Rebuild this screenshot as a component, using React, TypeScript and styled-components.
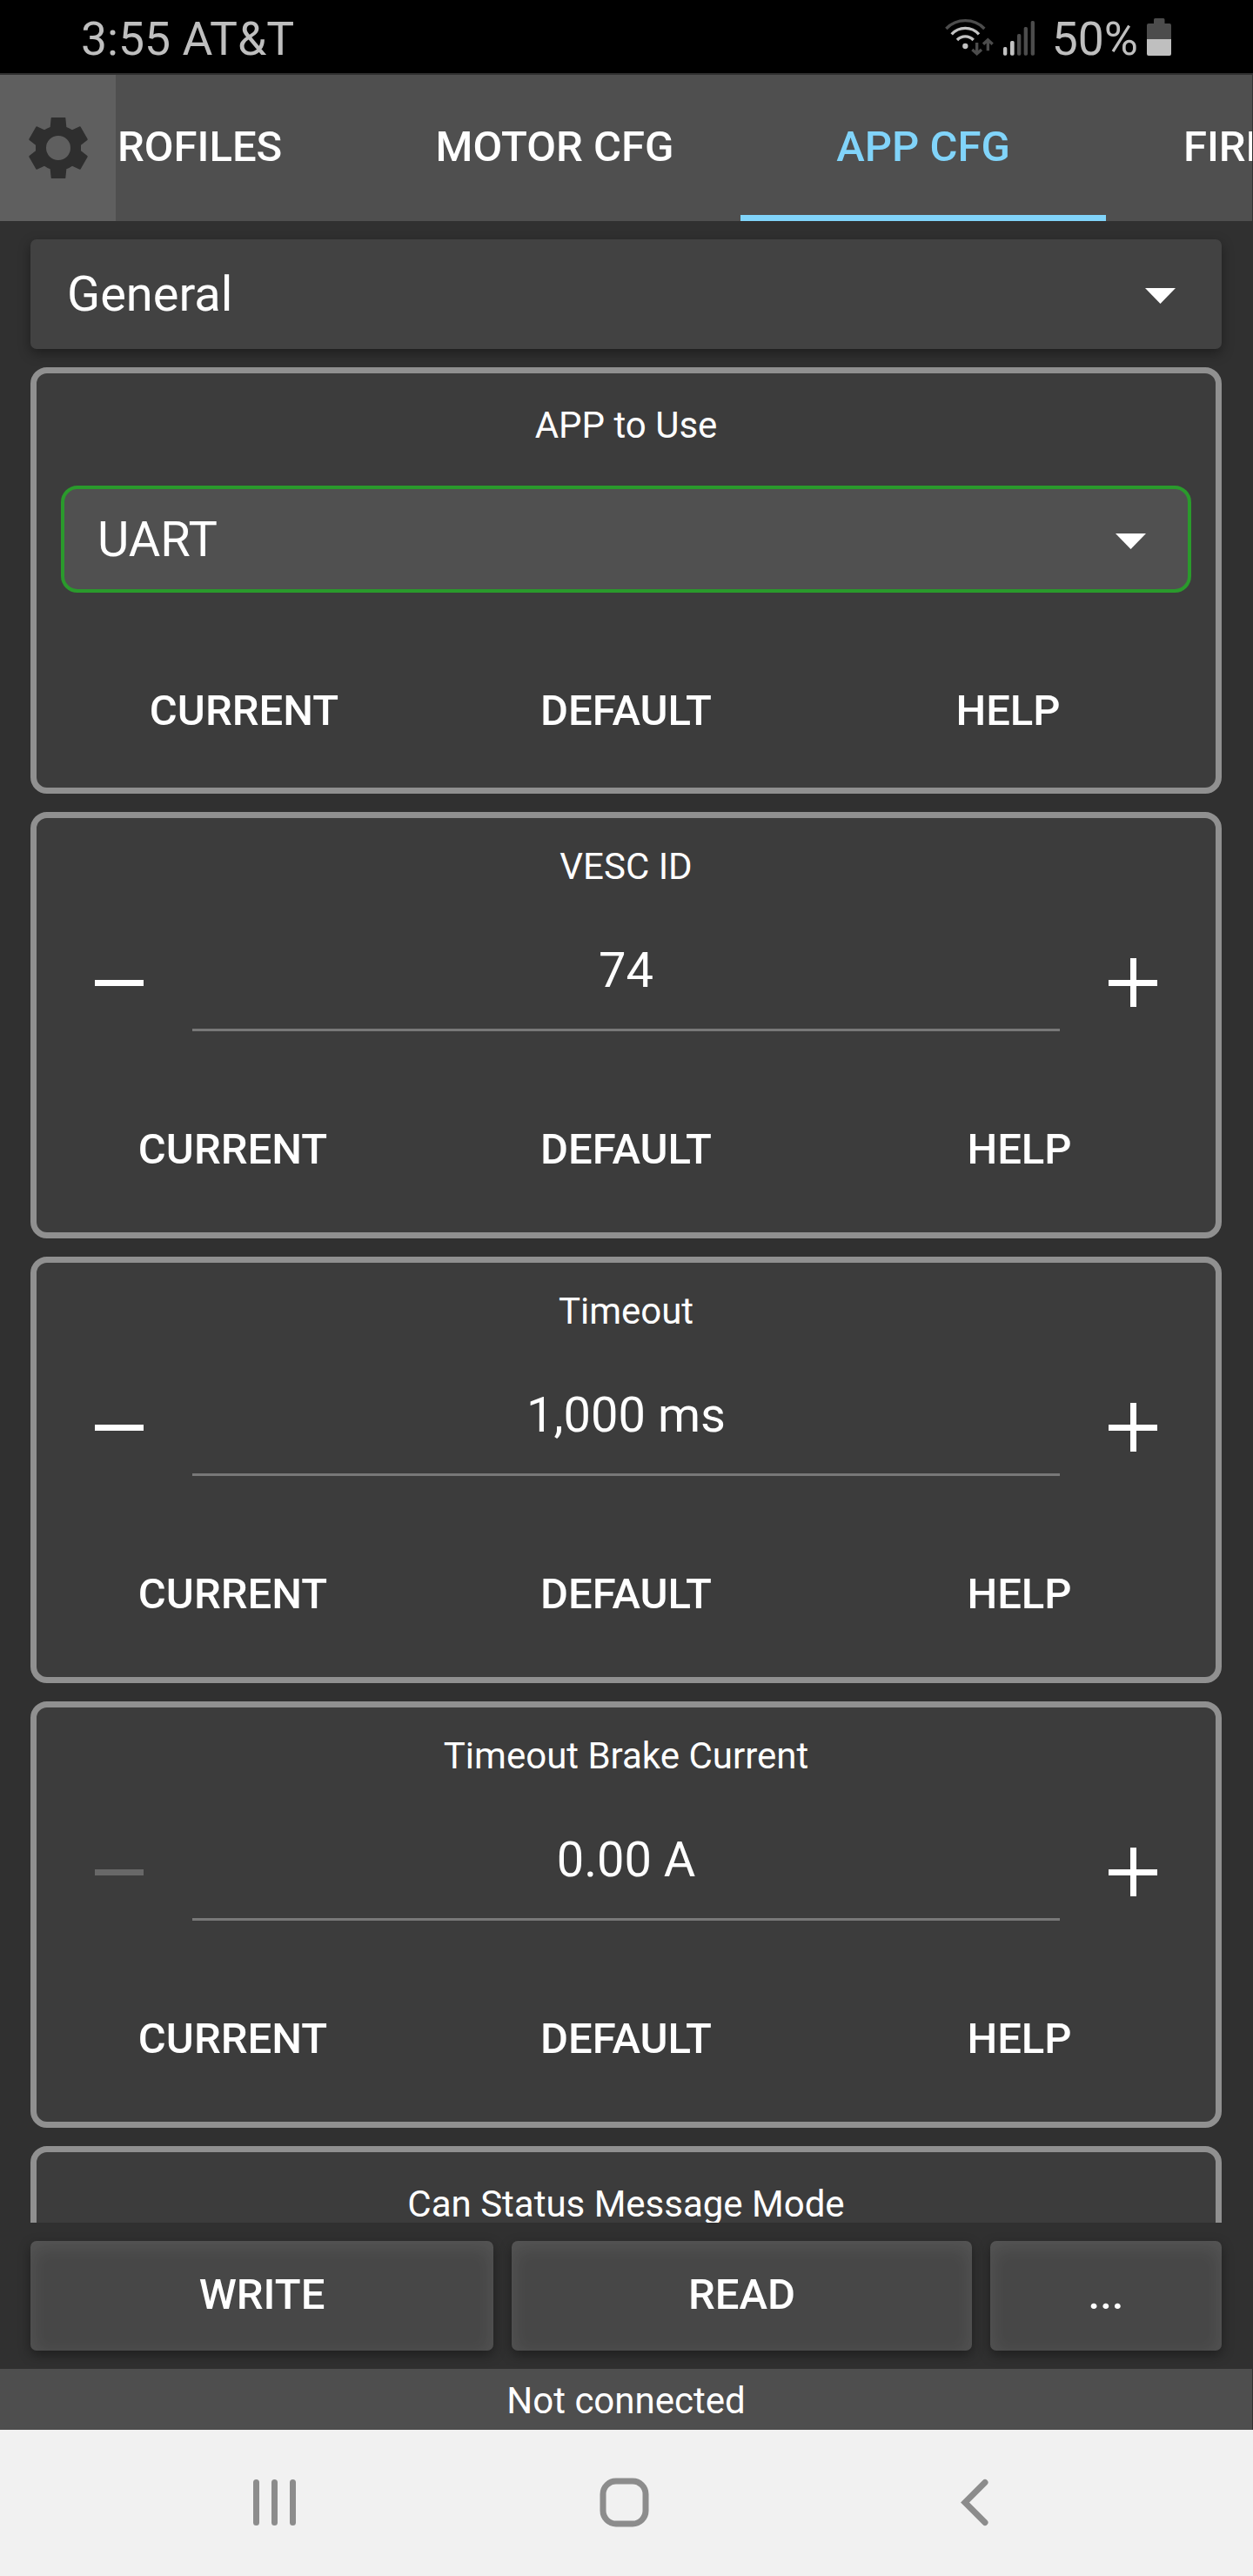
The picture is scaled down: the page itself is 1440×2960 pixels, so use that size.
import React from "react";
import styled, { createGlobalStyle } from "styled-components";

const GlobalStyle = createGlobalStyle`
  *, *::before, *::after { box-sizing: border-box; }
  body { margin: 0; background: #303030; }
  button { appearance: none; border: 0; margin: 0; padding: 0; background: none; color: inherit; font: inherit; }
`;

const Screen = styled.div`
  display: flex;
  flex-direction: column;
  width: 1440px;
  height: 2960px;
  overflow: hidden;
  background: #303030;
  color: #ffffff;
  font-family: Roboto, "Liberation Sans", sans-serif;
  font-size: 42px;
`;

const StatusBar = styled.header`
  display: flex;
  align-items: flex-start;
  justify-content: space-between;
  height: 84px;
  padding: 0 94px 0 93px;
  margin-bottom: 2px;
  background: #000000;
  color: #bfbfbf;
  font-size: 53.5px;
  line-height: 90px;
  flex: none;
`;

const Indicators = styled.div`
  display: flex;
  align-items: flex-start;
`;

const SignalIcons = styled.svg`
  width: 120px;
  height: 70px;
  margin: 10px 9px 0 0;
`;

const BatteryIcon = styled.svg`
  width: 28px;
  height: 43px;
  margin: 21px 0 0 10px;
`;

const Toolbar = styled.nav`
  display: flex;
  height: 168px;
  flex: none;
  margin-right: 1px;
  background: #4f4f4f;
`;

const SettingsButton = styled.button`
  display: flex;
  align-items: center;
  justify-content: center;
  width: 133px;
  height: 168px;
  background: #5f5f5f;
  flex: none;
`;

const GearIcon = styled.svg`
  width: 70px;
  height: 70px;
`;

const TabStrip = styled.div`
  display: flex;
  flex: 1;
  min-width: 0;
  overflow: hidden;
`;

const Tab = styled.div<{ $width: number; $active?: boolean; $align?: string; $pad?: string }>`
  display: flex;
  align-items: center;
  justify-content: ${(p) => p.$align ?? "center"};
  flex: 0 0 ${(p) => p.$width}px;
  padding: ${(p) => p.$pad ?? "0"};
  border-top: 5px solid transparent;
  border-bottom: 7px solid ${(p) => (p.$active ? "#81d4fa" : "transparent")};
  color: ${(p) => (p.$active ? "#81d4fa" : "#ffffff")};
  font-size: 49px;
  font-weight: 500;
  line-height: 56px;
  white-space: nowrap;
`;

const Content = styled.main`
  display: flex;
  flex-direction: column;
  height: 2300px;
  flex: none;
  padding: 21px 36px 0 35px;
  overflow: hidden;
`;

const Select = styled.div<{ $outlined?: boolean }>`
  display: flex;
  align-items: center;
  justify-content: space-between;
  flex: none;
  font-size: 56px;
  line-height: 64px;
  ${(p) =>
    p.$outlined
      ? `
    height: 123px;
    margin: 45px 28px 0;
    padding: 0 48px 0 38px;
    border: 4px solid #2a9a2c;
    border-radius: 19px;
    background: #505050;
  `
      : `
    height: 126px;
    padding: 0 53px 0 42px;
    border-radius: 7px;
    background: #424242;
    box-shadow: 0 5px 14px rgba(0, 0, 0, 0.38);
  `}
`;

const Caret = styled.svg`
  width: 35px;
  height: 18px;
  margin-top: 4px;
`;

const Card = styled.section<{ $top: number }>`
  display: flex;
  flex-direction: column;
  flex: none;
  height: 490px;
  margin-top: 21px;
  padding-top: ${(p) => p.$top}px;
  border: 7px solid #909090;
  border-radius: 19px;
  background: #3c3c3c;
`;

const CardTitle = styled.h2`
  margin: 0;
  font-size: 42px;
  font-weight: 400;
  line-height: 49px;
  text-align: center;
`;

const Stepper = styled.div`
  display: flex;
  justify-content: space-between;
  align-items: center;
  height: 112px;
  margin: 53px 67px 0;
`;

const StepIcon = styled.svg<{ $dim?: boolean }>`
  width: 56px;
  height: 56px;
  fill: ${(p) => (p.$dim ? "#686868" : "#ffffff")};
`;

const Field = styled.div`
  width: 997px;
  height: 112px;
  border-bottom: 3px solid #787878;
  font-size: 56px;
  line-height: 85px;
  text-align: center;
`;

const Actions = styled.div<{ $top: number; $column: number }>`
  display: grid;
  grid-template-columns: repeat(3, ${(p) => p.$column}px);
  justify-content: center;
  column-gap: 19px;
  margin-top: ${(p) => p.$top}px;
`;

const FlatButton = styled.button`
  height: 126px;
  font-size: 49px;
  font-weight: 500;
  line-height: 126px;
  text-align: center;
`;

const Footer = styled.div`
  display: grid;
  grid-template-columns: 532px 529px 266px;
  column-gap: 21px;
  height: 168px;
  flex: none;
  padding: 21px 36px 21px 35px;
`;

const RaisedButton = styled.button`
  height: 126px;
  padding-bottom: 2px;
  border-radius: 7px;
  background: #474747;
  box-shadow: inset 0 6px 22px rgba(255, 255, 255, 0.09), 0 5px 14px rgba(0, 0, 0, 0.38);
  font-size: 49px;
  font-weight: 500;
  line-height: 124px;
  text-align: center;
`;

const ConnectionBar = styled.div`
  height: 70px;
  flex: none;
  margin-right: 1px;
  background: #4e4e4e;
  line-height: 74px;
  text-align: center;
`;

const NavBar = styled.footer`
  display: flex;
  align-items: center;
  justify-content: space-between;
  height: 168px;
  flex: none;
  padding: 0 304px 1px 291px;
  background: #f1f1f1;
`;

const NavIcon = styled.svg<{ $width: number; $gapRight?: number }>`
  width: ${(p) => p.$width}px;
  height: 57px;
  margin-right: ${(p) => p.$gapRight ?? 0}px;
  fill: none;
  stroke: #8c8c8c;
  stroke-width: 7;
`;

const DropCaret = () => (
  <Caret viewBox="0 0 35 18">
    <path d="M0 0H35L17.5 18Z" fill="#fff" />
  </Caret>
);

const ParamActions = ({ top, column }: { top: number; column: number }) => (
  <Actions $top={top} $column={column}>
    <FlatButton>CURRENT</FlatButton>
    <FlatButton>DEFAULT</FlatButton>
    <FlatButton>HELP</FlatButton>
  </Actions>
);

const NumberCard = ({ title, value, atMin }: { title: string; value: string; atMin?: boolean }) => (
  <Card $top={31}>
    <CardTitle>{title}</CardTitle>
    <Stepper>
      <StepIcon viewBox="0 0 56 56" $dim={atMin}>
        <rect x="0" y="25" width="56" height="7" />
      </StepIcon>
      <Field>{value}</Field>
      <StepIcon viewBox="0 0 56 56">
        <path d="M0 25H25V0H32V25H56V32H32V56H25V32H0Z" />
      </StepIcon>
    </Stepper>
    <ParamActions top={73} column={433} />
  </Card>
);

const params = [
  { title: "VESC ID", value: "74" },
  { title: "Timeout", value: "1,000 ms" },
  { title: "Timeout Brake Current", value: "0.00 A", atMin: true },
];

export default function App() {
  return (
    <>
      <GlobalStyle />
      <Screen>
        <StatusBar>
          <span>3:55 AT&amp;T</span>
          <Indicators>
            <SignalIcons viewBox="0 0 360 210" fill="none" strokeWidth="10">
              <path d="M22 69A92 92 0 0 1 154 69" stroke="#4c4c4c" />
              <path d="M41 88A63 63 0 0 1 135 88" stroke="#c2c2c2" />
              <path d="M60 108A38 38 0 0 1 116 108" stroke="#c2c2c2" />
              <circle cx="88" cy="129" r="9.5" fill="#c2c2c2" />
              <path d="M128 117V154M112 141L128 155L144 141" stroke="#4c4c4c" />
              <path d="M166 145V108M150 122L166 107L182 122" stroke="#4c4c4c" />
              <g fill="#c2c2c2">
                <rect x="219" y="132" width="13" height="29" rx="5" />
                <rect x="243" y="111" width="14" height="50" rx="5" />
              </g>
              <g fill="#4c4c4c">
                <rect x="267" y="87" width="13" height="74" rx="5" />
                <rect x="290" y="63" width="13" height="98" rx="5" />
                <rect x="314" y="42" width="13" height="119" rx="5" />
              </g>
            </SignalIcons>
            <span>50%</span>
            <BatteryIcon viewBox="0 0 28 43">
              <path d="M8 1.500Q8 0 9.500 0H19Q20.500 0 20.500 1.500V6H26Q28 6 28 8V24H0V8Q0 6 2 6H8Z" fill="#4c4c4c" />
              <path d="M0 24H28V41Q28 43 26 43H2Q0 43 0 41Z" fill="#bfbfbf" />
            </BatteryIcon>
          </Indicators>
        </StatusBar>

        <Toolbar>
          <SettingsButton>
            <GearIcon viewBox="0 0 210 210">
              <path
                fill="#2e2e2e"
                fillRule="evenodd"
                d="M82 0H128Q130 0 130 2L133 33Q143 37 153 43L179 31Q181 30 182 32L206 74Q207 76 205 78L183 95V115L205 132Q207 134 206 136L182 178Q181 180 179 179L153 167Q143 174 133 178L130 208Q130 210 128 210H82Q80 210 80 208L77 178Q67 174 57 167L31 179Q29 180 28 178L4 136Q3 134 5 132L27 115V95L5 78Q3 76 4 74L28 32Q29 30 31 31L57 43Q67 37 77 33L80 2Q80 0 82 0ZM105 63A42 42 0 1 0 105 147A42 42 0 1 0 105 63Z"
              />
            </GearIcon>
          </SettingsButton>
          <TabStrip>
            <Tab $width={291} $align="flex-start" $pad="0 0 0 2px">ROFILES</Tab>
            <Tab $width={427}>MOTOR CFG</Tab>
            <Tab $width={420} $active>APP CFG</Tab>
            <Tab $width={420} $align="flex-start" $pad="0 0 0 89px">FIRMWARE</Tab>
          </TabStrip>
        </Toolbar>

        <Content>
          <Select>
            <span>General</span>
            <DropCaret />
          </Select>
          <Card $top={35}>
            <CardTitle>APP to Use</CardTitle>
            <Select $outlined>
              <span>UART</span>
              <DropCaret />
            </Select>
            <ParamActions top={73} column={420} />
          </Card>
          {params.map((p) => (
            <NumberCard key={p.title} {...p} />
          ))}
          <Card $top={35}>
            <CardTitle>Can Status Message Mode</CardTitle>
          </Card>
        </Content>

        <Footer>
          <RaisedButton>WRITE</RaisedButton>
          <RaisedButton>READ</RaisedButton>
          <RaisedButton>...</RaisedButton>
        </Footer>

        <ConnectionBar>Not connected</ConnectionBar>

        <NavBar>
          <NavIcon $width={49} viewBox="0 0 49 57" strokeLinecap="round">
            <path d="M3.500 5.500V51.500M24.500 5.500V51.500M45.500 5.500V51.500" />
          </NavIcon>
          <NavIcon $width={57} $gapRight={9} viewBox="0 0 57 57">
            <rect x="4" y="4" width="49" height="49" rx="15" />
          </NavIcon>
          <NavIcon $width={32} viewBox="0 0 32 57" strokeLinecap="round">
            <path d="M28 5.500L5 28.500L28 51.500" />
          </NavIcon>
        </NavBar>
      </Screen>
    </>
  );
}
